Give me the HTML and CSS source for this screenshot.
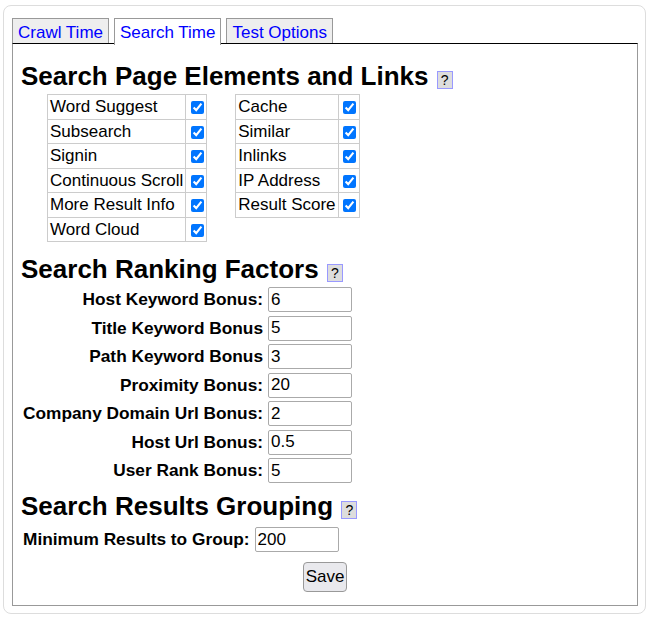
FILE: index.html
```html
<!DOCTYPE html>
<html lang="en">

<head>
    <meta charset="UTF-8">
    <title>Search Settings</title>
    <link rel="stylesheet" href="styles.css">
</head>

<body>
    <div class="panel">
        <!-- Tab strip -->
        <div class="tabs">
            <a class="tab" href="#crawl">Crawl Time</a>
            <a class="tab active" href="#search">Search Time</a>
            <a class="tab" href="#test">Test Options</a>
        </div>

        <form class="tab-body" id="search-settings">
            <!-- Page elements toggles -->
            <h2>Search Page Elements and Links <span class="help">?</span></h2>
            <div class="toggle-tables">
                <table class="toggles">
                    <tr><td>Word Suggest</td><td><input type="checkbox" checked></td></tr>
                    <tr><td>Subsearch</td><td><input type="checkbox" checked></td></tr>
                    <tr><td>Signin</td><td><input type="checkbox" checked></td></tr>
                    <tr><td>Continuous Scroll</td><td><input type="checkbox" checked></td></tr>
                    <tr><td>More Result Info</td><td><input type="checkbox" checked></td></tr>
                    <tr><td>Word Cloud</td><td><input type="checkbox" checked></td></tr>
                </table>
                <table class="toggles">
                    <tr><td>Cache</td><td><input type="checkbox" checked></td></tr>
                    <tr><td>Similar</td><td><input type="checkbox" checked></td></tr>
                    <tr><td>Inlinks</td><td><input type="checkbox" checked></td></tr>
                    <tr><td>IP Address</td><td><input type="checkbox" checked></td></tr>
                    <tr><td>Result Score</td><td><input type="checkbox" checked></td></tr>
                </table>
            </div>

            <!-- Ranking weights -->
            <h2>Search Ranking Factors <span class="help">?</span></h2>
            <div class="factor-grid">
                <label for="host-kw">Host Keyword Bonus:</label>
                <input type="text" id="host-kw" class="input-field" value="6">
                <label for="title-kw">Title Keyword Bonus</label>
                <input type="text" id="title-kw" class="input-field" value="5">
                <label for="path-kw">Path Keyword Bonus</label>
                <input type="text" id="path-kw" class="input-field" value="3">
                <label for="proximity">Proximity Bonus:</label>
                <input type="text" id="proximity" class="input-field" value="20">
                <label for="company-url">Company Domain Url Bonus:</label>
                <input type="text" id="company-url" class="input-field" value="2">
                <label for="host-url">Host Url Bonus:</label>
                <input type="text" id="host-url" class="input-field" value="0.5">
                <label for="user-rank">User Rank Bonus:</label>
                <input type="text" id="user-rank" class="input-field" value="5">
            </div>

            <!-- Grouping -->
            <h2>Search Results Grouping <span class="help">?</span></h2>
            <div class="group-row">
                <label for="min-group">Minimum Results to Group:</label>
                <input type="text" id="min-group" class="input-field" value="200">
            </div>

            <div class="actions">
                <button type="submit" class="btn">Save</button>
            </div>
        </form>
    </div>
</body>

</html>
```

FILE: styles.css
```css
/* Base */
body {
    margin: 0;
    font-family: "Liberation Sans", Arial, sans-serif;
    color: #000;
    background: #fff;
}

/* Outer rounded panel */
.panel {
    margin: 5px 0 0 3px;
    width: 626px;
    border: 1px solid #ddd;
    border-radius: 8px;
    padding: 12px 7px 7px 8px;
}

/* Tabs */
.tabs {
    display: flex;
    gap: 5px;
    height: 25px;
}

.tab {
    display: block;
    height: 24px;
    padding: 0 5px;
    border: 1px solid #999;
    border-bottom: none;
    background: #eee;
    color: #00f;
    text-decoration: none;
    font-size: 17px;
    line-height: 27px;
}

.tab.active {
    background: #fff;
    height: 26px;
    position: relative;
    z-index: 1;
}

.tab-body {
    border: 1px solid #999;
    border-top: 1px solid #000;
    padding: 17px 8px 14px 8px;
    height: 530px;
}

/* Section headings */
h2 {
    margin: 0;
    font-size: 26px;
    line-height: 30px;
    font-weight: bold;
}

.help {
    display: inline-block;
    vertical-align: 0;
    width: 14px;
    height: 16px;
    margin-left: 1px;
    border: 1px solid #99f;
    background: #ddd;
    font-size: 14px;
    font-weight: normal;
    line-height: 17px;
    text-align: center;
}

/* Toggle tables */
.toggle-tables {
    display: flex;
    align-items: flex-start;
    gap: 28px;
    margin: 3px 0 12px 26px;
}

.toggles {
    border-collapse: collapse;
}

.toggles td {
    border: 1px solid #ccc;
    padding: 2px;
    font-size: 17px;
    line-height: 19.5px;
    white-space: nowrap;
}

.toggles td:last-child {
    padding: 0;
    width: 20px;
    text-align: center;
    vertical-align: bottom;
}

.toggles input {
    margin: 0 0 2px 2px;
    width: 13px;
    height: 13px;
}

/* Ranking factor form */
.factor-grid {
    display: grid;
    grid-template-columns: auto 84px;
    column-gap: 5px;
    row-gap: 3.5px;
    align-items: center;
    justify-content: start;
    margin: 3px 0 8px 2px;
}

.factor-grid label,
.group-row label {
    font-size: 17.3px;
    font-weight: bold;
    text-align: right;
}

.input-field {
    box-sizing: border-box;
    width: 84px;
    height: 25px;
    padding: 1px 2px;
    border: 1px solid #aaa;
    border-radius: 2px;
    font-family: inherit;
    font-size: 17px;
}

.group-row {
    display: flex;
    align-items: center;
    gap: 5px;
    margin: 6px 0 0 2px;
}

/* Save button */
.actions {
    text-align: center;
    margin-top: 10px;
}

.btn {
    height: 30px;
    padding: 0 2px;
    border: 1px solid #999;
    border-radius: 4px;
    background: #e9e9ed;
    font-family: inherit;
    font-size: 17px;
    color: #000;
}
```
